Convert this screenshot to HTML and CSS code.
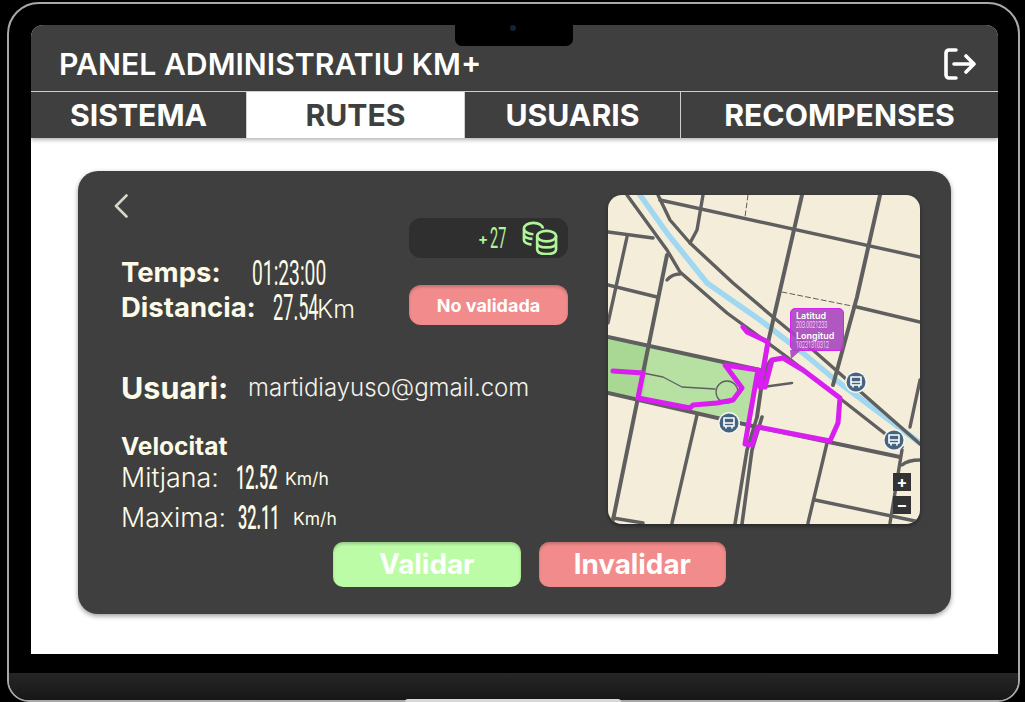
FILE: index.html
```html
<!DOCTYPE html>
<html lang="ca">
<head>
<meta charset="utf-8">
<title>Panel administratiu KM+</title>
<link rel="stylesheet" href="styles.css">
</head>
<body>
<div class="laptop">
  <div class="screen">
    <div class="notch"><span class="camera"></span></div>
    <header class="header">
      <h1 class="title">PANEL ADMINISTRATIU KM+</h1>
      <svg class="logout" viewBox="0 0 32 32" fill="none" stroke="#fff" stroke-width="3.600" stroke-linecap="round" stroke-linejoin="round"><path d="M12 2H5a3 3 0 0 0-3 3v22a3 3 0 0 0 3 3h7"/><path d="M10 16h20M22 8l8 8-8 8"/></svg>
    </header>
    <nav class="tabs">
      <div class="tab">SISTEMA</div>
      <div class="tab tab-active">RUTES</div>
      <div class="tab">USUARIS</div>
      <div class="tab">RECOMPENSES</div>
    </nav>
    <main class="content">
      <section class="card">
        <div class="card-top">
          <div class="left">
            <div class="summary">
              <div class="stats">
                <svg class="back" viewBox="0 0 14 24" fill="none" stroke="#d5d5c8" stroke-width="2.600" stroke-linecap="round" stroke-linejoin="round"><path d="M12.500 1.500 2 12l10.500 10.500"/></svg>
                <div class="row row-time"><span class="label label-temps">Temps:</span><span class="num num-time">01:23:00</span></div>
                <div class="row"><span class="label label-dist">Distancia:</span><span class="num num-dist">27.54</span><span class="unit-km">Km</span></div>
              </div>
              <div class="side">
                <div class="coins"><span class="plus">+</span><span class="num num-coins">27</span>
                  <svg class="coin-icon" viewBox="0 0 38 36" fill="none" stroke="#b0f59a" stroke-width="2.800"><path d="M22 8c0-3-4-6-10-6S2 5 2 8s4 6 10 6M2 8v6c0 3 4 5 9 5M2 14v6c0 2 3 4 8 5"/><ellipse cx="26" cy="16" rx="10" ry="5.500" fill="#2f2f2f"/><path d="M16 16v14c0 3 4 5 10 5s10-2 10-5V16M16 23c0 3 4 5 10 5s10-2 10-5"/></svg>
                </div>
                <div class="status">No validada</div>
              </div>
            </div>
            <div class="user"><span class="user-label">Usuari:</span><span class="email">martidiayuso@gmail.com</span></div>
            <div class="speed-title">Velocitat</div>
            <div class="speed"><span class="speed-label speed-mid">Mitjana:</span><span class="num num-speed num-mid">12.52</span><span class="unit">Km/h</span></div>
            <div class="speed"><span class="speed-label speed-max">Maxima:</span><span class="num num-speed num-max">32.11</span><span class="unit">Km/h</span></div>
          </div>
          <div class="map">
            <svg class="map-svg" viewBox="0 0 312 329" fill="none" stroke-linecap="round" stroke-linejoin="round">
              <rect width="312" height="329" fill="#f3edda"/>
              <path d="M0 142 152 175 140 227 0 198Z" fill="#b7e0a3"/>
              <path d="M0 142 42 151 35 204 0 198Z" fill="#a9d894"/>
              <g stroke="#5f5f5f" stroke-width="1.300">
                <path d="M35 178 55 182 74 192 107 194"/>
                <circle cx="119" cy="197" r="11"/>
              </g>
              <path d="M32 0 59 38 99 88 152 125 195 158 225 183 312 248" stroke="#9fd8f0" stroke-width="5.500"/>
              <g stroke="#5f5f5f" stroke-width="3.400">
                <path d="M19 0 59 55 72 77 119 118 179 162 234 205 294 252"/>
                <path d="M50 0 62 25 82 48 125 88 165 122 205 155 312 249"/>
                <path d="M52 5 312 62"/>
                <path d="M194 0 159 152 149 222" stroke-width="4"/>
                <path d="M272 0 249 102 225 190" stroke-width="4"/>
                <path d="M95 0 89 35 82 48"/>
                <path d="M0 37 45 43"/>
                <path d="M19 42 0 128"/>
                <path d="M59 60 35 178 5 325" stroke-width="4"/>
                <path d="M59 85Q64 79 72 79"/>
                <path d="M0 90 49 102"/>
                <path d="M0 142 152 175" stroke-width="4"/>
                <path d="M249 112 312 127"/>
                <path d="M0 198 149 232 292 262" stroke-width="4"/>
                <path d="M89 220 64 328"/>
                <path d="M219 248 200 328"/>
                <path d="M207 305 312 327"/>
                <path d="M294 255 282 328"/>
                <path d="M312 185 302 232"/>
                <path d="M294 270Q300 265 312 265"/>
                <path d="M155 192 184 188" stroke-width="2.500"/>
                <path d="M5 323 35 328"/>
                <path d="M164 165Q158 166 155 192"/>
                <path d="M149 222 139 255 127 329" stroke-width="3.600"/>
                <path d="M154 222 144 255 134 329" stroke-width="3.600"/>
              </g>
              <path d="M174 97 249 112M140 0 137 22" stroke="#5f5f5f" stroke-width="1" stroke-dasharray="5 3"/>
              <path d="M135 132 139 137 160 147 152 192 157 192 164 165 175 163 195 175 232 203 230 228 222 246 150 232 144 250 137 249 147 192 150 175 117 170 134 193 125 205 109 208 85 210 82 213 30 203 35 178 5 176" stroke="#d81ff0" stroke-width="5"/>
              <g transform="translate(248 187)"><circle r="11" fill="#f5f5f0"/><circle r="9.500" fill="#456480"/><path d="M-5-5h10v8h-10zM-5 0h10M-3 3v2M3 3v2" stroke="#fff" stroke-width="1.600"/></g>
              <g transform="translate(121 228)"><circle r="11" fill="#f5f5f0"/><circle r="9.500" fill="#456480"/><path d="M-5-5h10v8h-10zM-5 0h10M-3 3v2M3 3v2" stroke="#fff" stroke-width="1.600"/></g>
              <g transform="translate(286 245)"><circle r="11" fill="#f5f5f0"/><circle r="9.500" fill="#456480"/><path d="M-5-5h10v8h-10zM-5 0h10M-3 3v2M3 3v2" stroke="#fff" stroke-width="1.600"/></g>
            </svg>
            <div class="tooltip">
              <div class="tip-label">Latitud</div>
              <div class="tip-value">203.0021233</div>
              <div class="tip-label">Longitud</div>
              <div class="tip-value">10231310312</div>
            </div>
            <div class="zoom-controls"><span class="zoom-btn">+</span><span class="zoom-btn">−</span></div>
          </div>
        </div>
        <div class="actions">
          <button class="action action-ok">Validar</button>
          <button class="action action-no">Invalidar</button>
        </div>
      </section>
    </main>
  </div>
  <div class="base"></div>
  <div class="foot"></div>
</div>
</body>
</html>
```
FILE: styles.css
```css
* { box-sizing: border-box; }
html, body { margin: 0; height: 702px; overflow: hidden; background: #000; }
body { font-family: Inter, "Liberation Sans", sans-serif; }
.laptop {
  position: relative; display: flex; flex-direction: column;
  width: 1013px; height: 700px; margin: 2px 0 0 7px; padding-top: 21px;
  border: 2px solid #a8a8a8; border-radius: 32px 32px 22px 22px;
  background: #000;
}
.screen { position: relative; display: flex; flex-direction: column; width: 967px; height: 629px; margin-left: 22px; background: #fff; border-radius: 12px 12px 0 0; }
.notch { position: absolute; left: 424px; top: 0; width: 118px; height: 21px; background: #000; border-radius: 0 0 7px 7px; }
.camera { position: absolute; left: 55px; top: 0; width: 6px; height: 6px; border-radius: 50%; background: #10233a; }
.header { display: flex; align-items: center; justify-content: space-between; height: 66px; padding: 12px 22px 0 28px; background: #3f3f3f; border-radius: 12px 12px 0 0; }
.title { margin: 0; color: #fff; font-size: 30.200px; font-weight: 600; white-space: nowrap; }
.logout { width: 32px; height: 32px; }
.tabs { display: grid; grid-template-columns: 216px 218px 216px 1fr; height: 47px; padding: 0; border-top: 1px solid #cfcfcf; background: #3f3f3f; box-shadow: 0 2px 4px rgba(0,0,0,.3); position: relative; }
.tab { display: flex; align-items: center; justify-content: center; color: #fff; font-size: 30.200px; font-weight: 700; border-right: 1px solid #cfcfcf; }
.tab:last-child { border-right: 0; }
.tab-active { background: #fff; color: #3f3f3f; }
.content { flex: 1; padding: 33px 47px 40px; }
.card { display: flex; flex-direction: column; height: 443px; padding: 24px 31px 0 43px; background: #3f3f3f; border-radius: 20px; box-shadow: 0 2px 5px rgba(0,0,0,.4); }
.card-top { display: flex; justify-content: space-between; height: 329px; }
.left { width: 447px; display: flex; flex-direction: column; }
.summary { display: flex; justify-content: space-between; }
.stats { display: flex; flex-direction: column; }
.back { display: block; width: 14px; height: 24px; margin: -1px 0 37px -7px; }
.row { display: flex; align-items: center; height: 34px; color: #fdfbe8; }
.row-time { margin-bottom: 1px; }
.label { font-size: 27.500px; font-weight: 700; }
.label-temps { width: 131px; }
.label-dist { width: 152px; }
.num { display: inline-block; font-family: Roboto, sans-serif; font-weight: 300; line-height: 28px; white-space: nowrap; transform-origin: left center; transform: scaleX(.55); }
.num-time { width: 73px; margin-top: 4px; font-size: 35px; transform: scaleX(.55); font-weight: 400; }
.num-dist { width: 44px; margin-top: 2px; font-size: 37px; transform: scaleX(.49); font-weight: 400; }
.unit-km { margin-top: 4px; font-size: 25px; font-weight: 300; }
.side { width: 159px; margin-top: 23px; }
.coins { position: relative; display: flex; align-items: center; height: 40px; padding-left: 69px; background: #2f2f2f; border-radius: 12px; color: #b0f59a; }
.plus { width: 12px; font-size: 15px; font-weight: 700; }
.num-coins { font-size: 29px; font-weight: 400; transform: scaleX(.5); }
.coin-icon { position: absolute; left: 112px; top: 3px; width: 38px; height: 34px; }
.status { display: flex; align-items: center; justify-content: center; height: 40px; margin-top: 27px; background: #f28b8b; border-radius: 12px; color: #fff; font-size: 18px; font-weight: 700; box-shadow: inset 0 2px 3px rgba(0,0,0,.2); }
.user { display: flex; align-items: center; height: 34px; margin-top: 45px; color: #fdfbe8; }
.user-label { width: 127px; font-size: 30.500px; font-weight: 700; }
.email { font-size: 24px; font-weight: 300; color: #f2f2ea; white-space: nowrap; }
.speed-title { height: 30px; margin-top: 27px; line-height: 30px; color: #fdfbe8; font-size: 24.500px; font-weight: 700; }
.speed { display: flex; align-items: center; height: 32px; color: #fdfbe8; white-space: nowrap; }
.speed + .speed { margin-top: 8px; }
.speed-label { font-size: 26.800px; font-weight: 300; }
.speed-mid { width: 115px; }
.speed-max { width: 117px; }
.num-speed { font-size: 34px; font-weight: 500; transform: scaleX(.48); }
.num-mid { width: 49px; }
.num-max { width: 55px; }
.unit { margin-top: 2px; font-size: 17.500px; font-weight: 400; }
.map { position: relative; width: 312px; height: 329px; border-radius: 14px; overflow: hidden; box-shadow: 0 2px 4px rgba(0,0,0,.4); }
.map-svg { display: block; width: 312px; height: 329px; }
.tooltip { position: absolute; left: 182px; top: 113px; width: 54px; height: 43px; padding: 2px 5px; background: rgba(170,70,190,.9); border: 1px solid #d81ff0; border-radius: 5px; color: #fff; line-height: 1; }
.tooltip::after { content: ""; position: absolute; left: -1px; bottom: -9px; border-left: 1px solid transparent; border-top: 9px solid rgba(170,70,190,.9); border-right: 10px solid transparent; }
.tip-label { font-size: 9px; font-weight: 600; line-height: 10px; }
.tip-value { font-family: Roboto, sans-serif; font-size: 9px; line-height: 9px; font-weight: 300; white-space: nowrap; transform-origin: left center; transform: scaleX(.6); margin-bottom: 1px; }
.zoom-controls { position: absolute; left: 285px; top: 278px; display: flex; flex-direction: column; gap: 5px; }
.zoom-btn { display: flex; align-items: center; justify-content: center; width: 18px; height: 18px; background: #333; color: #fff; font-size: 16px; font-weight: 700; line-height: 1; }
.actions { display: flex; gap: 18px; margin: 18px 0 0 212px; }
.action { width: 187.500px; height: 45px; padding: 0 0 2px; border: 0; border-radius: 10px; color: #fff; font-family: Inter, sans-serif; font-size: 27.800px; font-weight: 700; box-shadow: inset 0 2px 3px rgba(0,0,0,.2); }
.action-ok { background: #bdfca6; }
.action-no { background: #f28b8b; }
.base { flex: 1; margin-top: 19px; background: linear-gradient(#262626, #171717); border-radius: 0 0 20px 20px; }
.foot { position: absolute; left: 396px; bottom: -2px; width: 216px; height: 3px; background: #d8d8d8; border-radius: 3px 3px 0 0; }
```
